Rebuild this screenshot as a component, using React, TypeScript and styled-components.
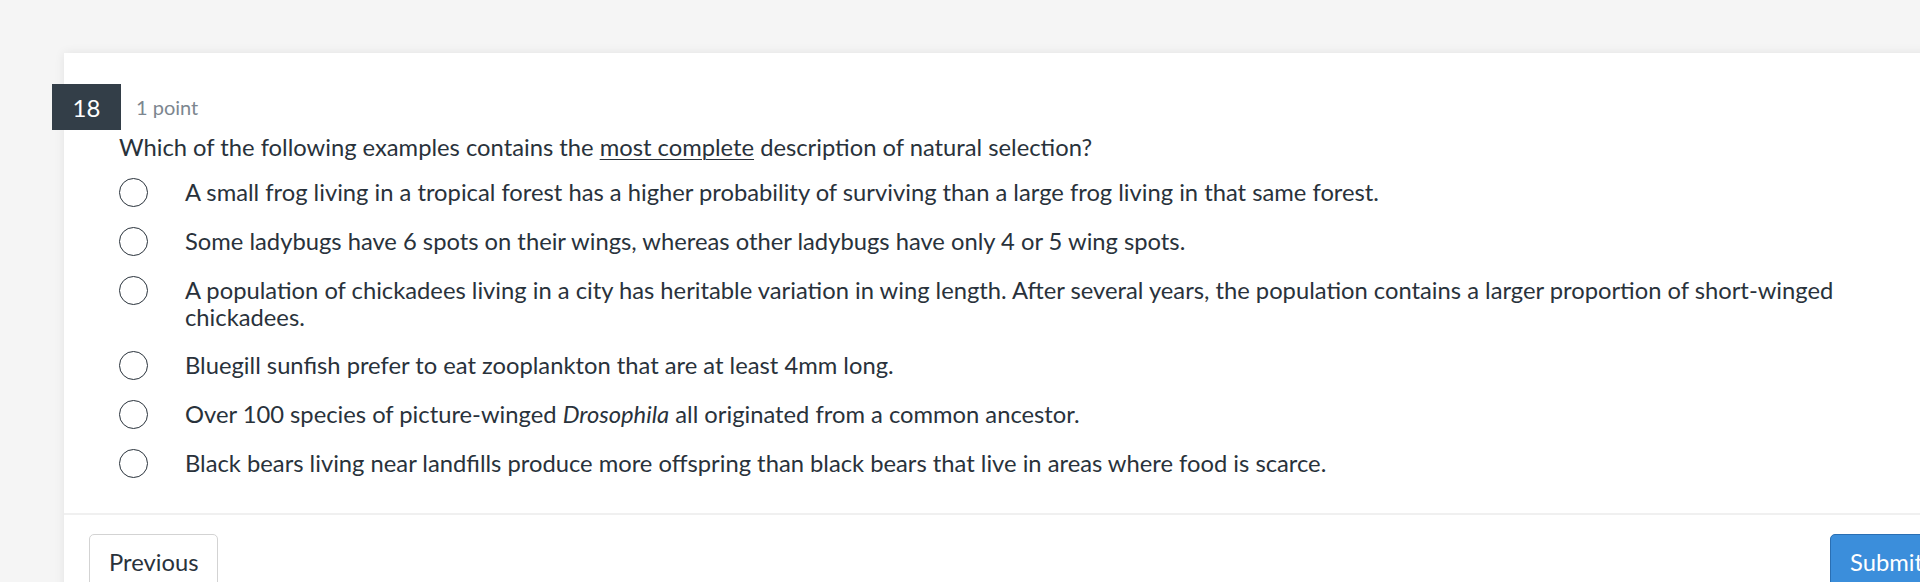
import React from 'react';
import styled, { createGlobalStyle } from 'styled-components';

const GlobalStyle = createGlobalStyle`
  html, body {
    margin: 0;
    padding: 0;
    background: #f5f5f5;
    overflow: hidden;
  }
  body {
    font-family: Lato, "Open Sans", "Liberation Sans", sans-serif;
    color: #29323b;
  }
`

const Page = styled.div`
  padding: 53px 0 0 64px;
  height: 582px;
  box-sizing: border-box;
`

const Card = styled.div`
  width: 1903px;
  background: #fff;
  box-shadow: 0 0 10px rgba(0, 0, 0, 0.08);
  min-height: 600px;
`

const QuestionBody = styled.div`
  padding: 31px 0 35px 55px;
  border-bottom: 2px solid #f0f0f0;
`

const Header = styled.div`
  display: flex;
  align-items: center;
  margin-left: -67px;
  gap: 15px;
`

const Badge = styled.div`
  width: 69px;
  height: 46px;
  background: #333e48;
  color: #fff;
  font-size: 24px;
  display: flex;
  align-items: center;
  justify-content: center;
`

const Points = styled.span`
  font-size: 20px;
  color: #7c868f;
`

const Prompt = styled.p`
  margin: 4px 0 18px;
  font-size: 23.75px;
  line-height: 27px;

  u {
    text-decoration-thickness: 1px;
    text-underline-offset: 3px;
  }
`

const Options = styled.ul`
  list-style: none;
  margin: 0;
  padding: 0;
  display: flex;
  flex-direction: column;
  gap: 21px;
`

const Option = styled.li`
  display: flex;
  align-items: flex-start;
  gap: 37px;
  font-size: 23.75px;
  line-height: 27px;
`

const OptionText = styled.span`
  max-width: 1680px;
`

const Radio = styled.span`
  flex: none;
  width: 27px;
  height: 27px;
  border: 1.8px solid #29323b;
  border-radius: 50%;
  margin-top: -1px;
`

const Footer = styled.div`
  display: flex;
  justify-content: space-between;
  padding: 19px 24px 0 25px;
`

const Button = styled.button<{ $primary?: boolean }>`
  font-family: Lato, "Open Sans", "Liberation Sans", sans-serif;
  font-size: 23.75px;
  height: 56px;
  padding: 0 19px;
  border-radius: 5px;
  cursor: pointer;
  color: ${p => (p.$primary ? '#fff' : '#29323b')};
  background: ${p => (p.$primary ? '#3b8edb' : '#fff')};
  border: 1px solid ${p => (p.$primary ? '#2a6fb3' : '#d3d3d3')};
`

const options: React.ReactNode[] = [
  'A small frog living in a tropical forest has a higher probability of surviving than a large frog living in that same forest.',
  'Some ladybugs have 6 spots on their wings, whereas other ladybugs have only 4 or 5 wing spots.',
  'A population of chickadees living in a city has heritable variation in wing length. After several years, the population contains a larger proportion of short-winged chickadees.',
  'Bluegill sunfish prefer to eat zooplankton that are at least 4mm long.',
  <>Over 100 species of picture-winged <i>Drosophila</i> all originated from a common ancestor.</>,
  'Black bears living near landfills produce more offspring than black bears that live in areas where food is scarce.',
]

export default function App() {
  return (
    <Page>
      <GlobalStyle />
      <Card>
        <QuestionBody>
          <Header>
            <Badge>18</Badge>
            <Points>1 point</Points>
          </Header>
          <Prompt>
            Which of the following examples contains the <u>most complete</u> description of natural selection?
          </Prompt>
          <Options>
            {options.map((text, i) => (
              <Option key={i}>
                <Radio />
                <OptionText>{text}</OptionText>
              </Option>
            ))}
          </Options>
        </QuestionBody>
        <Footer>
          <Button>Previous</Button>
          <Button $primary>Submit</Button>
        </Footer>
      </Card>
    </Page>
  )
}
